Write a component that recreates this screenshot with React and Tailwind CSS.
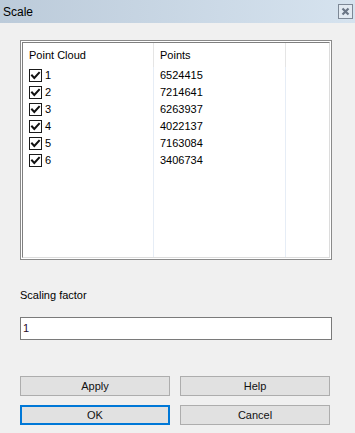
import React from "react";

const rows = [
  ["1", "6524415"],
  ["2", "7214641"],
  ["3", "6263937"],
  ["4", "4022137"],
  ["5", "7163084"],
  ["6", "3406734"],
];

function Check() {
  return (
    <span className="w-[13px] h-[13px] border border-[#1a1a1a] bg-white flex items-center justify-center shrink-0">
      <svg width="11" height="11" viewBox="0 0 11 11">
        <polyline points="2,5.5 4.3,8 9,2.8" fill="none" stroke="#111" strokeWidth="2" strokeLinecap="square" />
      </svg>
    </span>
  );
}

function Btn({ children, primary }) {
  return (
    <div
      className={
        "w-[150px] h-[20px] flex items-center justify-center bg-[#e1e1e1] text-[11px] text-[#111]" +
        (primary ? " border-2 border-[#0078d7]" : " border border-[#adadad]")
      }
    >
      {children}
    </div>
  );
}

export default function App() {
  return (
    <div
      className="w-[355px] h-[433px] bg-[#f0f0f0] flex flex-col overflow-hidden"
      style={{ fontFamily: '"Liberation Sans", Arial, sans-serif' }}
    >
      <div className="h-[23px] shrink-0 flex items-center justify-between pl-[3px] pr-[2px] bg-gradient-to-r from-[#bccbda] to-[#d6e3ef]">
        <span className="text-[12px] text-black leading-none">Scale</span>
        <div className="w-[15px] h-[15px] border border-[#7d8896] bg-[#e2eaf2] flex items-center justify-center">
          <svg width="9" height="9" viewBox="0 0 9 9">
            <path d="M1.5 1.5 L7.5 7.5 M7.5 1.5 L1.5 7.5" stroke="#6b7686" strokeWidth="2.2" />
          </svg>
        </div>
      </div>

      <div className="pl-[20px] pt-[17px] flex flex-col">
        <div className="w-[312px] h-[220px] border border-[#8a8a8a] bg-white p-px">
          <div className="w-full h-full border-t border-l border-[#7f7f7f] border-r-[#dcdcdc] border-b-[#dcdcdc] border-r border-b bg-white flex text-[11px] text-black">
            <div className="w-[131px] border-r border-[#e6edf6] flex flex-col">
              <div className="h-[24px] flex items-center pl-[6px] border-r border-[#e5e5e5] -mr-px">Point Cloud</div>
              {rows.map(([n]) => (
                <div key={n} className="h-[17px] flex items-center pl-[6px] gap-[3px]">
                  <Check />
                  <span>{n}</span>
                </div>
              ))}
            </div>
            <div className="w-[132px] border-r border-[#e6edf6] flex flex-col">
              <div className="h-[24px] flex items-center pl-[6px] border-r border-[#e5e5e5] -mr-px">Points</div>
              {rows.map(([n, p]) => (
                <div key={n} className="h-[17px] flex items-center pl-[6px]">
                  {p}
                </div>
              ))}
            </div>
            <div className="flex-1" />
          </div>
        </div>

        <div className="mt-[29px] text-[11px] text-black leading-[13px]">Scaling factor</div>

        <div className="mt-[15px] w-[312px] h-[23px] border border-[#7a7a7a] bg-white flex items-center pl-[2px] text-[11px] text-[#2a0c2a]">
          1
        </div>

        <div className="mt-[36px] flex gap-[10px]">
          <Btn>Apply</Btn>
          <Btn>Help</Btn>
        </div>
        <div className="mt-[9px] flex gap-[10px]">
          <Btn primary>OK</Btn>
          <Btn>Cancel</Btn>
        </div>
      </div>
    </div>
  );
}
